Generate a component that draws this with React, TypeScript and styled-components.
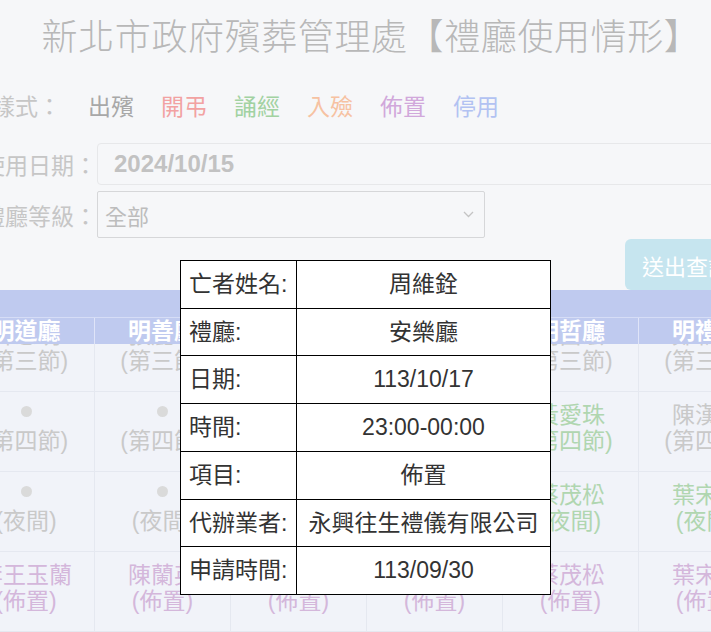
import styled, { createGlobalStyle } from "styled-components";

const GlobalStyle = createGlobalStyle`
    html, body {
        margin: 0;
        padding: 0;
        overflow: hidden;
        background: #f6f7f9;
    }
    #root {
        width: 100vw;
        height: 100vh;
        overflow: hidden;
    }
    * {
        box-sizing: border-box;
    }
`;

const FONT = `"Liberation Sans", "Noto Sans CJK TC", sans-serif`;

type Tone = "grey" | "green" | "purple";

const TONES: Record<Tone, string> = {
    grey: "#c9c9c9",
    green: "#b0d6b0",
    purple: "#d4b7db",
};

interface Slot {
    name?: string;
    note: string;
    tone: Tone;
}

const HALLS = ["明道廳", "明善廳", "明德廳", "明仁廳", "明哲廳", "明禮廳", "明義廳"];

const LEGEND = [
    { label: "出殯", color: "#a8a8a8" },
    { label: "開弔", color: "#f2a2a2" },
    { label: "誦經", color: "#a2d2a2" },
    { label: "入殮", color: "#f6c2a2" },
    { label: "佈置", color: "#d1a8db" },
    { label: "停用", color: "#b2c2f2" },
];

const SCHEDULE: Slot[][] = [
    [
        { name: "林志明", note: "(第三節)", tone: "grey" },
        { name: "張麗華", note: "(第三節)", tone: "grey" },
        { name: "吳秀英", note: "(第三節)", tone: "grey" },
        { name: "許文雄", note: "(第三節)", tone: "grey" },
        { name: "劉昌宏", note: "(第三節)", tone: "grey" },
        { name: "鄭新發", note: "(第三節)", tone: "grey" },
        { name: "王春生", note: "(第三節)", tone: "grey" },
    ],
    [
        { note: "(第四節)", tone: "grey" },
        { note: "(第四節)", tone: "grey" },
        { note: "(第四節)", tone: "grey" },
        { name: "洪明德", note: "(第四節)", tone: "grey" },
        { name: "黃愛珠", note: "(第四節)", tone: "green" },
        { name: "陳漢卿", note: "(第四節)", tone: "grey" },
        { note: "(第四節)", tone: "grey" },
    ],
    [
        { note: "(夜間)", tone: "grey" },
        { note: "(夜間)", tone: "grey" },
        { note: "(夜間)", tone: "grey" },
        { note: "(夜間)", tone: "grey" },
        { name: "蔡茂松", note: "(夜間)", tone: "green" },
        { name: "葉宋美", note: "(夜間)", tone: "green" },
        { note: "(夜間)", tone: "grey" },
    ],
    [
        { name: "李王玉蘭", note: "(佈置)", tone: "purple" },
        { name: "陳蘭英", note: "(佈置)", tone: "purple" },
        { name: "周維銓", note: "(佈置)", tone: "purple" },
        { name: "楊金水", note: "(佈置)", tone: "purple" },
        { name: "蔡茂松", note: "(佈置)", tone: "purple" },
        { name: "葉宋美", note: "(佈置)", tone: "purple" },
        { note: "(佈置)", tone: "grey" },
    ],
];

const DETAIL = [
    { label: "亡者姓名:", value: "周維銓" },
    { label: "禮廳:", value: "安樂廳" },
    { label: "日期:", value: "113/10/17" },
    { label: "時間:", value: "23:00-00:00" },
    { label: "項目:", value: "佈置" },
    { label: "代辦業者:", value: "永興往生禮儀有限公司" },
    { label: "申請時間:", value: "113/09/30" },
];

const Page = styled.div`
    width: 806px;
    margin-left: -42px;
    font-family: ${FONT};
`;

const Title = styled.h1`
    margin: 0;
    padding: 13px 0 0 20px;
    text-align: center;
    font-size: 36px;
    line-height: 50px;
    letter-spacing: 0.6px;
    font-weight: 300;
    color: #b8b8b8;
    white-space: nowrap;
`;

const Form = styled.div`
    display: flex;
    flex-direction: column;
    padding: 0 17px 0 24px;
`;

const LegendRow = styled.div`
    display: flex;
    align-items: center;
    gap: 27px;
    height: 40px;
    margin-top: 22px;
    padding-left: 10px;
    font-size: 23px;
`;

const Label = styled.span`
    flex: none;
    width: 115px;
    font-size: 23px;
    color: #c6c6c6;
    white-space: nowrap;
`;

const LegendLabel = styled(Label)`
    width: auto;
`;

const LegendItem = styled.span<{ $color: string }>`
    color: ${(p) => p.$color};
`;

const FieldRow = styled.div<{ $gap: number }>`
    display: flex;
    align-items: center;
    margin-top: ${(p) => p.$gap}px;
`;

const DateBox = styled.div`
    flex: 1;
    height: 42px;
    display: flex;
    align-items: center;
    padding-left: 16px;
    border: 1px solid #e7e8ea;
    border-radius: 4px;
    background: #f6f7f9;
    font-size: 24px;
    font-weight: bold;
    color: #c2c2c2;
`;

const SelectBox = styled.div`
    width: 388px;
    height: 47px;
    display: flex;
    align-items: center;
    justify-content: space-between;
    padding: 0 10px 0 7px;
    border: 1px solid #d6d7d9;
    border-radius: 2px;
    background: #f6f7f9;
    font-size: 22px;
    color: #bdbdbd;
`;

const ButtonRow = styled.div`
    display: flex;
    justify-content: flex-end;
    margin-top: 1px;
`;

const SubmitButton = styled.button`
    height: 51px;
    padding: 0 17px;
    border: none;
    border-radius: 6px;
    background: #c6e5ef;
    color: #ffffff;
    font-family: ${FONT};
    font-size: 22px;
`;

const Schedule = styled.div`
    width: ${HALLS.length * 136}px;
`;

const Band = styled.div`
    height: 27px;
    background: #bfcaef;
    position: relative;
    z-index: 1;
`;

const HeadRow = styled.div`
    display: grid;
    grid-template-columns: repeat(${HALLS.length}, 136px);
    height: 27px;
    background: #bfcaef;
    border-top: 1px solid #d6ddf6;
    position: relative;
    z-index: 1;
`;

const HeadCell = styled.div`
    text-align: center;
    font-size: 23px;
    line-height: 26px;
    font-weight: bold;
    color: #ffffff;
    border-left: 1px solid #dfe4f8;
    overflow: hidden;
    white-space: nowrap;

    &:first-child {
        border-left: none;
    }
`;

const Body = styled.div`
    margin-top: -32px;
    background: #f1f3f9;
`;

const BodyRow = styled.div`
    display: grid;
    grid-template-columns: repeat(${HALLS.length}, 136px);
    height: 80px;
    border-bottom: 1px solid #e5e8f0;
`;

const BodyCell = styled.div<{ $tone: Tone }>`
    display: flex;
    flex-direction: column;
    align-items: center;
    justify-content: center;
    padding-bottom: 8px;
    border-left: 1px solid #e5e8f0;
    font-size: 23px;
    line-height: 26px;
    color: ${(p) => TONES[p.$tone]};
    white-space: nowrap;

    &:first-child {
        border-left: none;
    }
`;

const DotLine = styled.div`
    height: 26px;
    display: flex;
    align-items: center;
    padding-bottom: 6px;

    &::before {
        content: "";
        width: 11px;
        height: 11px;
        border-radius: 50%;
        background: #dadada;
    }
`;

const Popup = styled.table`
    position: fixed;
    left: 180px;
    top: 260px;
    z-index: 10;
    width: 371px;
    border-collapse: collapse;
    background: #ffffff;
    font-family: ${FONT};
    font-size: 23px;
    color: #333333;
`;

const PopupLabel = styled.td`
    width: 116px;
    padding: 0 0 0 8px;
    line-height: 46.7px;
    border: 1px solid #000000;
    white-space: nowrap;
`;

const PopupValue = styled.td`
    padding: 0 6px;
    line-height: 46.7px;
    text-align: center;
    border: 1px solid #000000;
    white-space: nowrap;
`;

const Chevron = () => (
    <svg width="11" height="7" viewBox="0 0 11 7" fill="none">
        <path d="M1 1l4.5 4.5L10 1" stroke="#c4c4c4" strokeWidth="1.3" />
    </svg>
);

export default function App() {
    return (
        <>
            <GlobalStyle />
            <Page>
                <Title>新北市政府殯葬管理處【禮廳使用情形】</Title>
                <Form>
                    <LegendRow>
                        <LegendLabel>樣式：</LegendLabel>
                        {LEGEND.map((item) => (
                            <LegendItem key={item.label} $color={item.color}>
                                {item.label}
                            </LegendItem>
                        ))}
                    </LegendRow>
                    <FieldRow $gap={18}>
                        <Label>使用日期：</Label>
                        <DateBox>2024/10/15</DateBox>
                    </FieldRow>
                    <FieldRow $gap={6}>
                        <Label>禮廳等級：</Label>
                        <SelectBox>
                            全部
                            <Chevron />
                        </SelectBox>
                    </FieldRow>
                    <ButtonRow>
                        <SubmitButton>送出查詢</SubmitButton>
                    </ButtonRow>
                </Form>
                <Schedule>
                    <Band />
                    <HeadRow>
                        {HALLS.map((hall) => (
                            <HeadCell key={hall}>{hall}</HeadCell>
                        ))}
                    </HeadRow>
                    <Body>
                        {SCHEDULE.map((row, r) => (
                            <BodyRow key={r}>
                                {row.map((slot, c) => (
                                    <BodyCell key={c} $tone={slot.tone}>
                                        {slot.name ? <div>{slot.name}</div> : <DotLine />}
                                        <div>{slot.note}</div>
                                    </BodyCell>
                                ))}
                            </BodyRow>
                        ))}
                    </Body>
                </Schedule>
            </Page>
            <Popup>
                <tbody>
                    {DETAIL.map((row) => (
                        <tr key={row.label}>
                            <PopupLabel>{row.label}</PopupLabel>
                            <PopupValue>{row.value}</PopupValue>
                        </tr>
                    ))}
                </tbody>
            </Popup>
        </>
    );
}
